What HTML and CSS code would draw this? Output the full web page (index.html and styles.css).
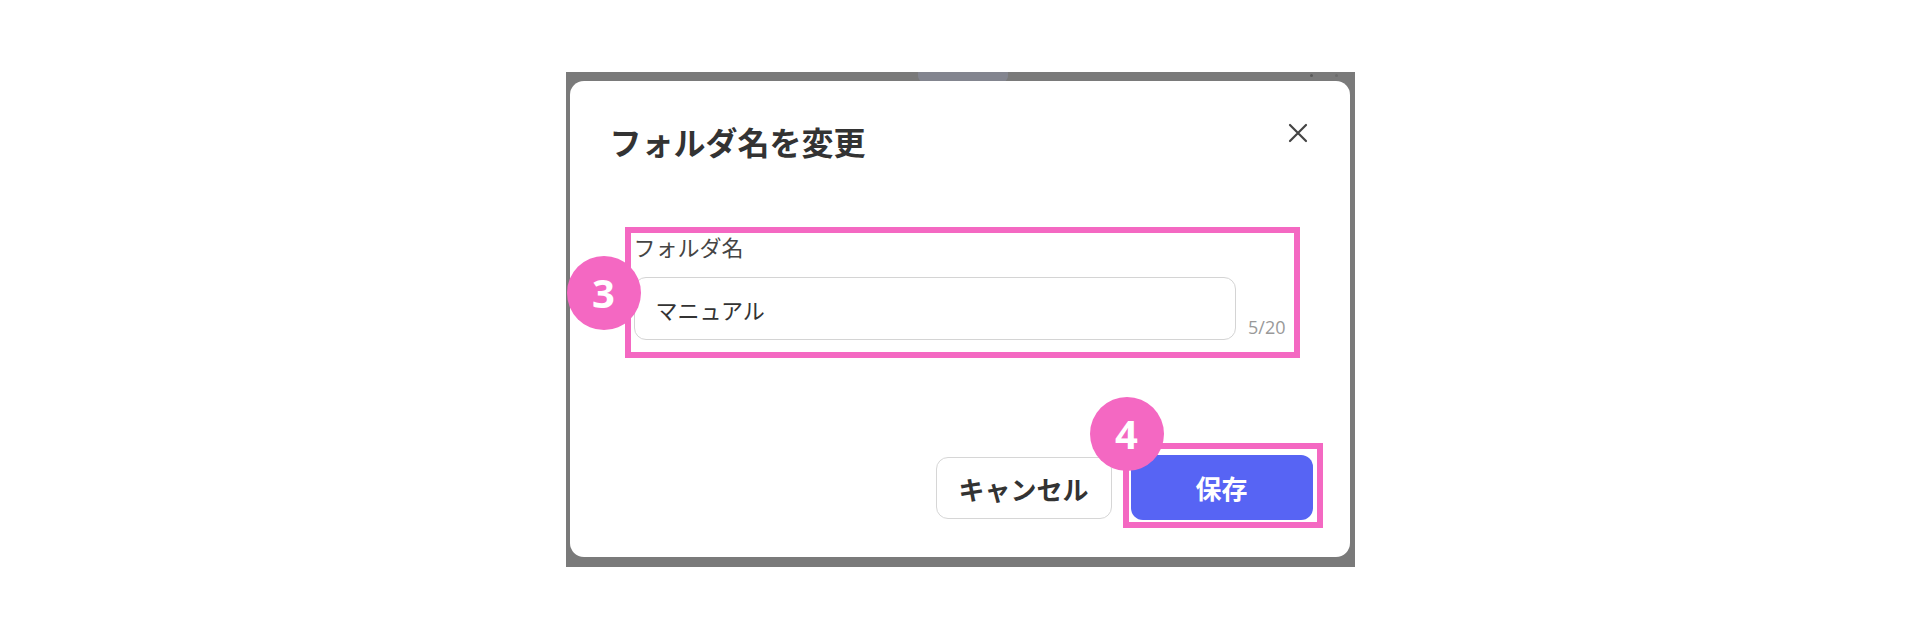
FILE: index.html
```html
<!DOCTYPE html>
<html lang="ja">
<head>
<meta charset="utf-8">
<title>フォルダ名を変更</title>
<link rel="stylesheet" href="styles.css">
</head>
<body>
<div class="frame">
  <div class="bg-pill"></div>
  <div class="bg-dot bg-dot-1"></div>
  <div class="bg-dot bg-dot-2"></div>
  <div class="dialog">
    <div class="header">
      <h1 class="title">フォルダ名を変更</h1>
      <button class="close" aria-label="閉じる">
        <svg width="24" height="24" viewBox="0 0 24 24"><path d="M4 4 L20 20 M20 4 L4 20" stroke="#444" stroke-width="2.2" stroke-linecap="round" fill="none"/></svg>
      </button>
    </div>
    <div class="field-box">
      <div class="badge badge-3">3</div>
      <div class="label">フォルダ名</div>
      <div class="row">
        <input class="input" type="text" value="マニュアル">
        <span class="counter">5/20</span>
      </div>
    </div>
    <div class="footer">
      <button class="btn-cancel">キャンセル</button>
      <div class="save-box">
        <div class="badge badge-4">4</div>
        <button class="btn-save">保存</button>
      </div>
    </div>
  </div>
</div>
</body>
</html>
```
FILE: styles.css
```css
html, body {
  margin: 0;
  padding: 0;
  background: #ffffff;
}
body {
  font-family: "Noto Sans CJK JP", "Noto Sans", sans-serif;
  height: 640px;
  overflow: hidden;
}
.frame {
  position: relative;
  width: 789px;
  height: 495px;
  margin: 72px auto 0;
  box-sizing: border-box;
  padding: 9px 5px 10px 4px;
  background: #7a7a7a;
}
.bg-pill {
  position: absolute;
  left: 352px;
  top: 0;
  width: 90px;
  height: 10px;
  border-radius: 0 0 6px 6px;
  background: #83858f;
}
.bg-dot {
  position: absolute;
  top: 2px;
  width: 3px;
  height: 3px;
  border-radius: 50%;
  background: #5a5a5a;
}
.bg-dot-1 {
  left: 744px;
}
.bg-dot-2 {
  left: 769px;
  background: #6c6c6c;
}
.dialog {
  position: relative;
  height: 100%;
  box-sizing: border-box;
  background: #ffffff;
  border-radius: 14px;
  padding: 38px 27px 0 40px;
  display: flex;
  flex-direction: column;
}
.header {
  display: flex;
  justify-content: space-between;
  align-items: flex-start;
  margin-right: 13px;
}
.title {
  margin: 0;
  font-size: 32px;
  line-height: 44px;
  font-weight: 700;
  color: #333333;
}
.close {
  width: 24px;
  height: 24px;
  padding: 0;
  margin-top: 2px;
  border: none;
  background: none;
  display: flex;
}
.field-box {
  position: relative;
  margin: 64px 23px 0 15px;
  border: 6px solid #f468c2;
  padding: 0 8px 12px 3px;
}
.label {
  font-size: 22px;
  line-height: 26px;
  color: #444444;
}
.row {
  display: flex;
  align-items: flex-end;
  gap: 12px;
  margin-top: 18px;
}
.input {
  flex: 1;
  min-width: 0;
  height: 63px;
  box-sizing: border-box;
  border: 1px solid #d4d4d4;
  border-radius: 12px;
  padding: 0 0 0 21px;
  font-family: "Noto Sans CJK JP", "Noto Sans", sans-serif;
  font-size: 22px;
  color: #333333;
  background: #ffffff;
  outline: none;
}
.counter {
  font-family: "Open Sans", "Noto Sans", sans-serif;
  font-size: 18px;
  line-height: 18px;
  color: #999999;
  margin-bottom: 4px;
}
.footer {
  display: flex;
  justify-content: flex-end;
  align-items: flex-end;
  gap: 11px;
  margin-top: 85px;
}
.btn-cancel {
  width: 176px;
  height: 62px;
  margin-bottom: 9px;
  box-sizing: border-box;
  border: 1px solid #d6d6d6;
  border-radius: 12px;
  background: #ffffff;
  font-family: "Noto Sans CJK JP", "Noto Sans", sans-serif;
  font-size: 26px;
  font-weight: 700;
  color: #333333;
  padding: 0;
}
.save-box {
  position: relative;
  border: 6px solid #f468c2;
  padding: 6px 4px 2px 2px;
  display: flex;
}
.btn-save {
  width: 182px;
  height: 65px;
  border: none;
  border-radius: 12px;
  background: #5764f4;
  font-family: "Noto Sans CJK JP", "Noto Sans", sans-serif;
  font-size: 26px;
  font-weight: 700;
  color: #ffffff;
  padding: 0;
}
.badge {
  position: absolute;
  z-index: 2;
  width: 74px;
  height: 74px;
  border-radius: 50%;
  background: #f468c2;
  color: #ffffff;
  font-family: "Noto Sans", sans-serif;
  font-weight: 700;
  font-size: 40px;
  line-height: 1;
  display: flex;
  align-items: center;
  justify-content: center;
}
.badge-3 {
  left: -64px;
  top: 23px;
}
.badge-4 {
  left: -39px;
  top: -52px;
}
```
